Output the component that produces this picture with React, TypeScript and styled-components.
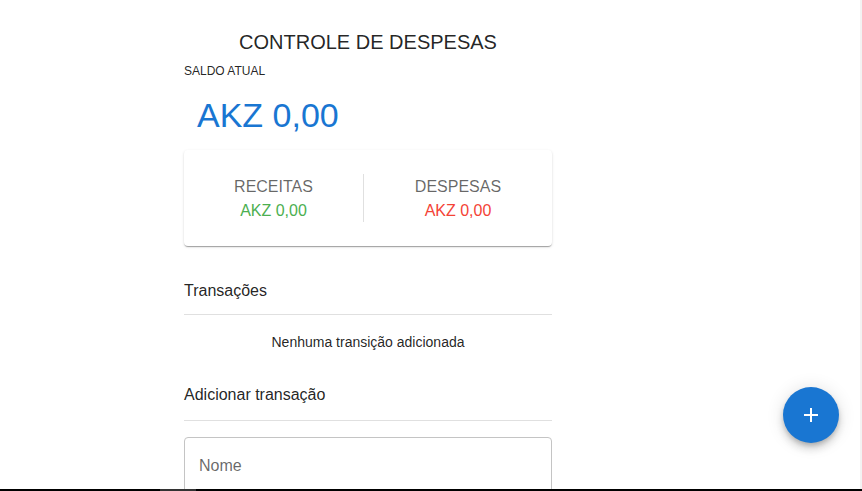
import React from "react";
import styled, { createGlobalStyle } from "styled-components";

const GlobalStyle = createGlobalStyle`
  html, body {
    margin: 0;
    padding: 0;
    background: #fff;
    font-family: "Liberation Sans", Arial, sans-serif;
    color: rgba(0, 0, 0, 0.87);
    overflow: hidden;
  }
`;

const App: React.FC = () => {
  return (
    <>
      <GlobalStyle />
      <Page>
        <Column>
          <Title>Controle de despesas</Title>
          <Overline>Saldo atual</Overline>
          <Balance>AKZ 0,00</Balance>

          <SummaryCard>
            <SummaryItem $width="179px">
              <SummaryLabel>Receitas</SummaryLabel>
              <SummaryValue $tone="income">AKZ 0,00</SummaryValue>
            </SummaryItem>
            <SummaryDivider />
            <SummaryItem>
              <SummaryLabel>Despesas</SummaryLabel>
              <SummaryValue $tone="expense">AKZ 0,00</SummaryValue>
            </SummaryItem>
          </SummaryCard>

          <SectionHeader $gap={34} $pad={12}>
            Transações
          </SectionHeader>
          <EmptyText>Nenhuma transição adicionada</EmptyText>

          <SectionHeader $gap={32} $pad={14}>
            Adicionar transação
          </SectionHeader>
          <Field>
            <Input placeholder="Nome" />
          </Field>
        </Column>
      </Page>

      <Fab aria-label="adicionar">
        <svg width="24" height="24" viewBox="0 0 24 24">
          <path d="M19 13h-6v6h-2v-6H5v-2h6V5h2v6h6v2z" fill="#fff" />
        </svg>
      </Fab>

      <BottomBar>
        <BottomThumb />
      </BottomBar>
    </>
  );
};

const Page = styled.main`
  width: 100%;
  min-height: 491px;
  border-right: 2px solid #f3f3f3;
  box-sizing: border-box;
`;

const Column = styled.div`
  width: 368px;
  margin-left: 184px;
  padding-top: 29px;
  display: flex;
  flex-direction: column;
`;

const Title = styled.h1`
  margin: 0;
  font-size: 20px;
  font-weight: 400;
  line-height: 26px;
  text-transform: uppercase;
  text-align: center;
  color: rgba(0, 0, 0, 0.87);
`;

const Overline = styled.span`
  margin-top: 9px;
  font-size: 12px;
  line-height: 14px;
  text-transform: uppercase;
`;

const Balance = styled.h2`
  margin: 16px 0 0 13px;
  font-size: 34px;
  font-weight: 400;
  line-height: 42px;
  color: #1976d2;
`;

const SummaryCard = styled.section`
  margin-top: 14px;
  height: 96px;
  display: flex;
  align-items: center;
  background: #fff;
  border-radius: 4px;
  box-shadow: 0px 2px 1px -1px rgba(0, 0, 0, 0.2),
    0px 1px 1px 0px rgba(0, 0, 0, 0.14), 0px 1px 3px 0px rgba(0, 0, 0, 0.12);
`;

const SummaryItem = styled.div<{ $width?: string }>`
  ${({ $width }) => ($width ? `width: ${$width};` : "flex: 1;")}
  display: flex;
  flex-direction: column;
  align-items: center;
  gap: 1px;
`;

const SummaryDivider = styled.div`
  width: 1px;
  height: 48px;
  background: #e0e0e0;
`;

const SummaryLabel = styled.span`
  font-size: 16px;
  line-height: 23px;
  text-transform: uppercase;
  color: rgba(0, 0, 0, 0.6);
`;

const SummaryValue = styled.span<{ $tone: "income" | "expense" }>`
  font-size: 16px;
  line-height: 23px;
  color: ${({ $tone }) => ($tone === "income" ? "#4caf50" : "#f44336")};
`;

const SectionHeader = styled.h3<{ $gap: number; $pad: number }>`
  margin: ${({ $gap }) => $gap}px 0 0 0;
  padding-bottom: ${({ $pad }) => $pad}px;
  font-size: 16px;
  font-weight: 400;
  line-height: 22px;
  border-bottom: 1px solid #e0e0e0;
`;

const EmptyText = styled.p`
  margin: 17px 0 0 0;
  font-size: 14px;
  line-height: 20px;
  text-align: center;
`;

const Field = styled.div`
  margin-top: 16px;
  height: 56px;
  border: 1px solid #c4c4c4;
  border-radius: 4px;
  display: flex;
  align-items: center;
  padding: 0 14px;
`;

const Input = styled.input`
  border: none;
  outline: none;
  width: 100%;
  font-family: "Liberation Sans", Arial, sans-serif;
  font-size: 16px;
  color: rgba(0, 0, 0, 0.87);
  background: transparent;
  padding: 0;

  &::placeholder {
    color: rgba(0, 0, 0, 0.6);
  }
`;

const Fab = styled.button`
  position: fixed;
  left: 783px;
  top: 387px;
  width: 56px;
  height: 56px;
  border-radius: 50%;
  border: none;
  background: #1976d2;
  display: flex;
  align-items: center;
  justify-content: center;
  padding: 0;
  box-shadow: 0px 3px 5px -1px rgba(0, 0, 0, 0.2),
    0px 6px 10px 0px rgba(0, 0, 0, 0.14), 0px 1px 18px 0px rgba(0, 0, 0, 0.12);
`;

const BottomBar = styled.div`
  position: fixed;
  left: 0;
  right: 0;
  bottom: 0;
  height: 2px;
  background: #000;
`;

const BottomThumb = styled.div`
  margin-left: 160px;
  width: 36px;
  height: 100%;
  background: #333;
`;

export default App;
